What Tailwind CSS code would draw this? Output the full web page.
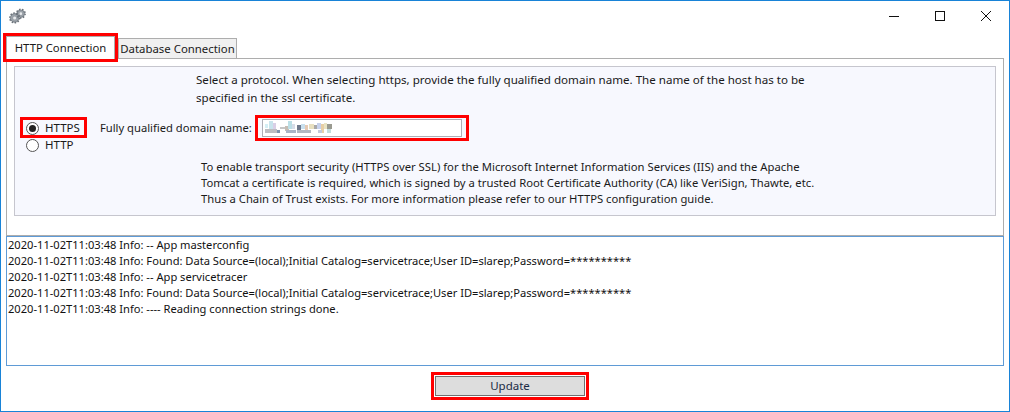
<!doctype html>
<html><head><meta charset="utf-8"><script src="https://cdn.jsdelivr.net/npm/@tailwindcss/browser@4"></script></head>
<body class="bg-white">
<div class="w-[1010px] h-[412px] box-border border border-[#1883d7] bg-white overflow-hidden flex flex-col font-['Noto_Sans',sans-serif] text-[11.2px] leading-4 text-[#1a1a1a]">
  <div class="h-[30px] shrink-0 flex items-center justify-between pl-[8px] pr-[18px]">
    <svg width="17" height="17" viewBox="0 0 18 18">
      <g fill="#9aa1a8" stroke="#5c646c" stroke-width=".6"><circle cx="12.5" cy="6" r="4"/><circle cx="6" cy="10.5" r="4.6"/></g>
      <g fill="none" stroke="#6b737b" stroke-width="1.6" stroke-dasharray="1.6 1.6"><circle cx="12.5" cy="6" r="4.6"/><circle cx="6" cy="10.5" r="5.2"/></g>
      <circle cx="6" cy="10.5" r="1.6" fill="#e8eaec"/><circle cx="12.5" cy="6" r="1.4" fill="#e8eaec"/>
    </svg>
    <div class="flex items-center gap-[36px]">
      <svg width="10" height="10" viewBox="0 0 10 10"><path d="M0 5.5H10" stroke="#111" stroke-width="1"/></svg>
      <svg width="10" height="10" viewBox="0 0 10 10"><rect x=".5" y=".5" width="9" height="9" fill="none" stroke="#111" stroke-width="1"/></svg>
      <svg width="10" height="10" viewBox="0 0 10 10"><path d="M0 0L10 10M10 0L0 10" stroke="#111" stroke-width="1" fill="none"/></svg>
    </div>
  </div>
  <div class="h-[27px] shrink-0 flex items-end pl-[5px]">
    <div class="w-[109px] h-[23px] -mb-px z-10 bg-white border border-b-0 border-[#adadad] flex items-center justify-center text-[11.3px] outline-[3px] outline-[#f00]">HTTP Connection</div>
    <div class="ml-[3px] w-[119px] h-[20px] bg-[#f0f0f0] border border-b-0 border-[#adadad] flex items-center justify-center text-[11.4px]">Database Connection</div>
  </div>
  <div class="mx-[5px] h-[178px] shrink-0 border border-[#adadad] px-[7px] pt-[7px]">
    <div class="h-[150px] border border-[#c6c6ce] bg-[#f7f8fe] flex flex-col">
      <div class="pl-[181px] pt-[4px] h-[38px] w-[800px] text-[11.58px] leading-[18px]">Select a protocol. When selecting https, provide the fully qualified domain name. The name of the host has to be specified in the ssl certificate.</div>
      <div class="flex items-start pl-[5px] pt-[12px] h-[54px]">
        <div class="flex flex-col w-[80px]">
          <div class="h-[21px] w-[67px] flex items-center gap-[6px] pl-[6px] pt-[1px] outline-[3px] outline-[#f00] -outline-offset-[3px]">
            <span class="w-[13px] h-[13px] rounded-full border border-[#555] flex items-center justify-center bg-white shrink-0"><span class="w-[7px] h-[7px] rounded-full bg-[#222]"></span></span><span class="text-[11.5px]">HTTPS</span>
          </div>
          <div class="h-[14px] flex items-center gap-[6px] pl-[6px]">
            <span class="w-[13px] h-[13px] rounded-full border border-[#555] bg-white shrink-0"></span><span class="text-[11.5px]">HTTP</span>
          </div>
        </div>
        <div class="flex items-center h-[21px]">
          <span class="w-[158px] pt-[1px]">Fully qualified domain name:</span>
          <div class="px-[4px] py-[1px] outline-[3px] outline-[#f00]">
            <div class="w-[200px] h-[18px] bg-white border border-[#aeaeb6] flex items-center pl-[1px]">
              <svg width="70" height="13" viewBox="0 0 70 13" shape-rendering="crispEdges">
                <rect x="1" y="3" width="3" height="4" fill="#d5eef5"/><rect x="5" y="0" width="4" height="8" fill="#c8e4ec"/><rect x="9" y="2" width="3" height="6" fill="#d9cfe6"/>
                <rect x="1" y="8" width="12" height="4" fill="#bdbdc2"/><rect x="13" y="9" width="3" height="3" fill="#7d92ad"/><rect x="16" y="6" width="5" height="2" fill="#c6c6c6"/><rect x="21" y="5" width="4" height="5" fill="#c6bdb4"/>
                <rect x="24" y="0" width="4" height="8" fill="#bcdfe6"/><rect x="28" y="3" width="3" height="5" fill="#d7dde8"/><rect x="22" y="9" width="10" height="3" fill="#aab4c6"/><rect x="33" y="4" width="4" height="5" fill="#707a8c"/><rect x="37" y="3" width="4" height="5" fill="#c9e0ee"/><rect x="41" y="4" width="3" height="5" fill="#e5c9b3"/><rect x="33" y="9" width="14" height="3" fill="#b2b8c2"/><rect x="45" y="3" width="5" height="5" fill="#e8e0c0"/><rect x="50" y="4" width="3" height="4" fill="#a9a9a9"/><rect x="53" y="2" width="4" height="6" fill="#c7d2ec"/><rect x="57" y="3" width="3" height="9" fill="#e8cfa5"/><rect x="60" y="2" width="3" height="6" fill="#e9e4c4"/><rect x="63" y="3" width="5" height="5" fill="#9a9a90"/><rect x="63" y="8" width="4" height="4" fill="#c4dcdc"/><rect x="54" y="9" width="4" height="3" fill="#c3c9dc"/>
              </svg>
            </div>
          </div>
        </div>
      </div>
      <div class="pl-[186px] w-[840px] leading-4 text-[11.28px]">To enable transport security (HTTPS over SSL) for the Microsoft Internet Information Services (IIS) and the Apache<br>Tomcat a certificate is required, which is signed by a trusted Root Certificate Authority (CA) like VeriSign, Thawte, etc.<br>Thus a Chain of Trust exists. For more information please refer to our HTTPS configuration guide.</div>
    </div>
  </div>
  <div class="mx-[5px] w-[998px] h-[130px] shrink-0 border border-[#5f9bd6] pl-px leading-4 text-[11.14px] text-[#111]">
    <div>2020-11-02T11:03:48 Info: -- App masterconfig</div>
    <div>2020-11-02T11:03:48 Info: Found: Data Source=(local);Initial Catalog=servicetrace;User ID=slarep;Password=**********</div>
    <div>2020-11-02T11:03:48 Info: -- App servicetracer</div>
    <div>2020-11-02T11:03:48 Info: Found: Data Source=(local);Initial Catalog=servicetrace;User ID=slarep;Password=**********</div>
    <div>2020-11-02T11:03:48 Info: ---- Reading connection strings done.</div>
  </div>
  <div class="flex-1 flex justify-center items-start pt-[10px] pl-[10px]">
    <button class="w-[150px] h-[20px] box-border bg-[#dddddd] border border-[#707070] outline-[3px] outline-[#f00] outline-offset-[1px] text-[#1a2a44] text-[11.5px] flex items-center justify-center">Update</button>
  </div>
</div>
</body></html>
